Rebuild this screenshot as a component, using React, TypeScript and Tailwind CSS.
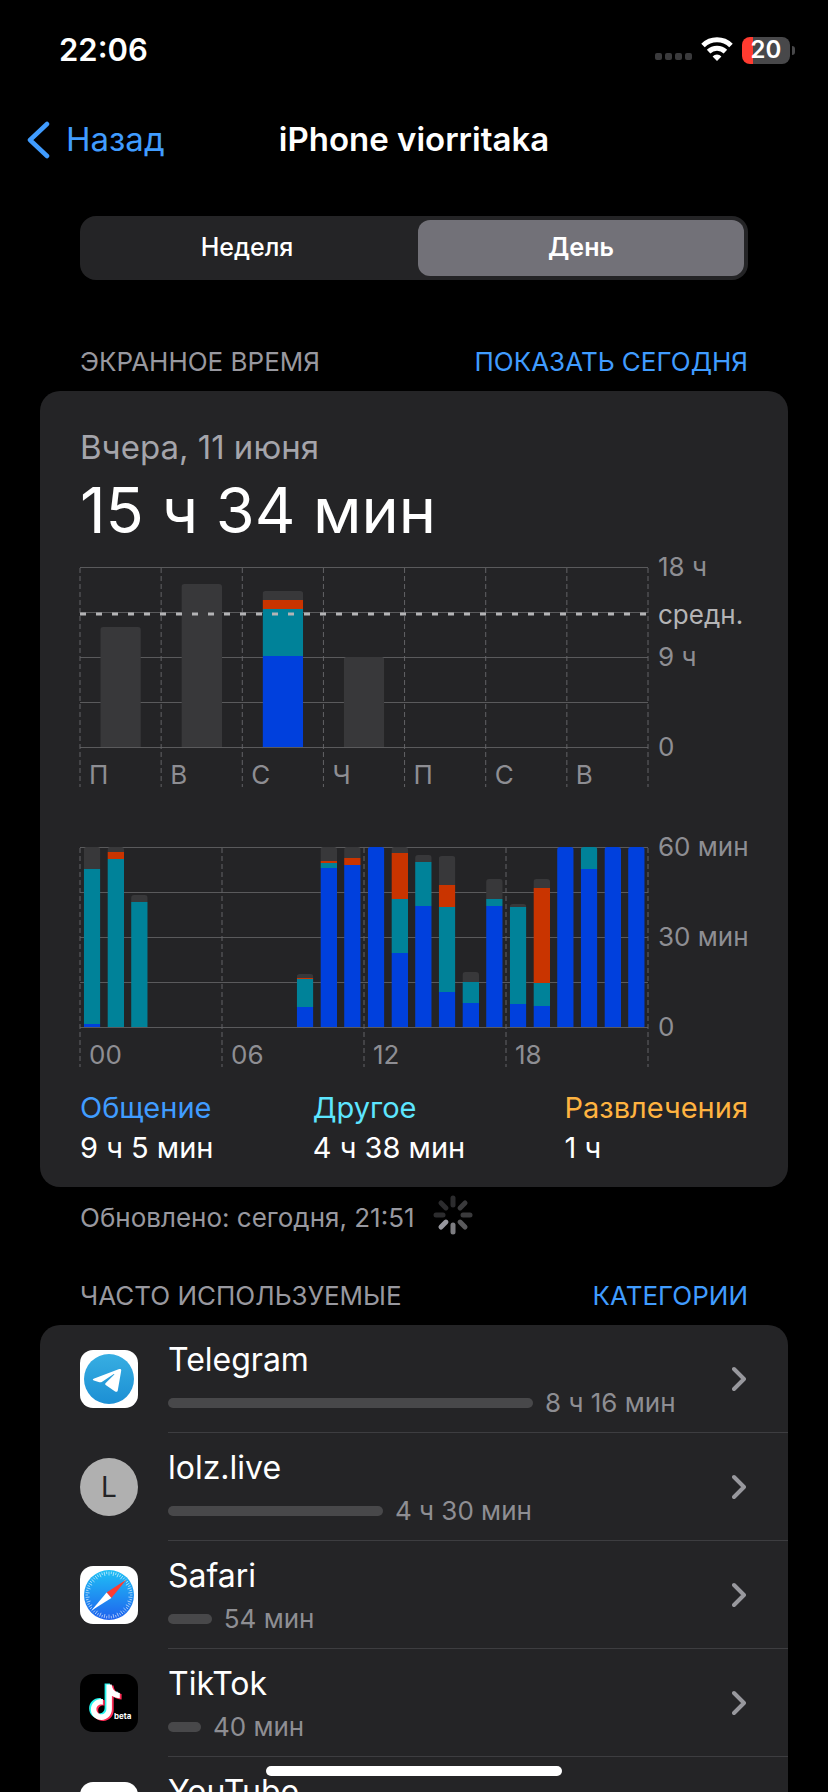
import { useState } from 'react';
import type { ReactNode } from 'react';

type Segment = [kind: 'social' | 'other' | 'fun' | 'rest', size: number];

interface IBar {
  slot: number;
  segments: Segment[];
}

const FILLS = {
  social: '#0040dd',
  other: '#008299',
  fun: '#c93400',
  rest: '#38383a',
};

const PLOT_HEIGHT = 180;

const WEEK_BARS: IBar[] = [
  { slot: 0, segments: [['rest', 120]] },
  { slot: 1, segments: [['rest', 163]] },
  { slot: 2, segments: [['social', 91], ['other', 47], ['fun', 9], ['rest', 9]] },
  { slot: 3, segments: [['rest', 90]] },
];

const DAY_BARS: IBar[] = [
  { slot: 0, segments: [['social', 3], ['other', 155], ['rest', 22]] },
  { slot: 1, segments: [['other', 168], ['fun', 7], ['rest', 5]] },
  { slot: 2, segments: [['other', 125], ['rest', 7]] },
  { slot: 9, segments: [['social', 20], ['other', 28], ['fun', 1], ['rest', 4]] },
  { slot: 10, segments: [['social', 159], ['other', 5], ['fun', 2], ['rest', 14]] },
  { slot: 11, segments: [['social', 162], ['fun', 7], ['rest', 11]] },
  { slot: 12, segments: [['social', 180]] },
  { slot: 13, segments: [['social', 74], ['other', 54], ['fun', 46], ['rest', 6]] },
  { slot: 14, segments: [['social', 121], ['other', 44], ['rest', 7]] },
  { slot: 15, segments: [['social', 35], ['other', 85], ['fun', 22], ['rest', 29]] },
  { slot: 16, segments: [['social', 24], ['other', 21], ['rest', 10]] },
  { slot: 17, segments: [['social', 121], ['other', 7], ['rest', 20]] },
  { slot: 18, segments: [['social', 23], ['other', 97], ['rest', 3]] },
  { slot: 19, segments: [['social', 21], ['other', 23], ['fun', 95], ['rest', 9]] },
  { slot: 20, segments: [['social', 180]] },
  { slot: 21, segments: [['social', 158], ['other', 22]] },
  { slot: 22, segments: [['social', 180]] },
  { slot: 23, segments: [['social', 180]] },
];

interface IChartProps {
  id: string;
  label: string;
  bars: IBar[];
  slots: number;
  barOffset: number;
  barWidth: number;
  ticks: string[];
  scale: string[];
  average?: number;
}

function Chart({ id, label, bars, slots, barOffset, barWidth, ticks, scale, average }: IChartProps) {
  return (
    <div className="flex text-[26px] leading-[30px] text-[#8e8e93]">
      <svg className="h-[220px] min-w-0 flex-1 overflow-visible" role="img" aria-label={label}>
        {[0, 45, 90, 135, 180].map((y) => (
          <rect key={y} x="0" y={y} width="100%" height="1" fill="#5a5a5c" />
        ))}
        {[...ticks, ''].map((tick, i) => {
          const x = `${(i / ticks.length) * 100}%`;
          return (
            <g key={i}>
              <line x1={x} x2={x} y1="1" y2="220" stroke="#636366" strokeWidth="1" strokeDasharray="5 3" />
              <text x={x} y="217" dx="9" fill="currentColor">
                {tick}
              </text>
            </g>
          );
        })}
        {bars.map((bar) => {
          const total = bar.segments.reduce((sum, [, size]) => sum + size, 0);
          const x = `${((bar.slot + barOffset) / slots) * 100}%`;
          const width = `${(barWidth / slots) * 100}%`;
          let y = PLOT_HEIGHT;
          return (
            <g key={bar.slot}>
              <clipPath id={`${id}-${bar.slot}`}>
                <rect x={x} y={PLOT_HEIGHT - total} width={width} height={total + 6} rx="3" />
              </clipPath>
              <g clipPath={`url(#${id}-${bar.slot})`}>
                {bar.segments.map(([kind, size]) => {
                  y -= size;
                  return <rect key={kind} x={x} y={y} width={width} height={size} fill={FILLS[kind]} />;
                })}
              </g>
            </g>
          );
        })}
        {average && (
          <line x1="0" x2="100%" y1={average} y2={average} stroke="#b4b4b6" strokeWidth="3" strokeDasharray="6 10" />
        )}
      </svg>
      <div className="relative -mt-[15px] flex h-[210px] w-[100px] flex-col justify-between pl-[10px] whitespace-nowrap">
        {scale.map((mark) => (
          <span key={mark}>{mark}</span>
        ))}
        {average && (
          <span className="absolute top-12 text-[#b4b4b6]">средн.</span>
        )}
      </div>
    </div>
  );
}

function StatusBar() {
  return (
    <div className="flex h-[100px] shrink-0 items-center justify-between pr-[33px] pl-[59px]">
      <span className="text-[31px] font-semibold">22:06</span>
      <div className="flex items-center">
        <svg className="h-7 w-[38px]" viewBox="0 0 38 28" fill="#3a3a3c">
          <rect x="0" y="17" width="7" height="7" rx="2" />
          <rect x="10" y="17" width="7" height="7" rx="2" />
          <rect x="20" y="17" width="7" height="7" rx="2" />
          <rect x="30" y="17" width="7" height="7" rx="2" />
        </svg>
        <svg className="ml-2 h-7 w-8" viewBox="0 0 32 28" fill="none" stroke="#fff" strokeWidth="5">
          <path d="M2 9.500a20 20 0 0 1 28 0" />
          <path d="M7.600 15.600a12 12 0 0 1 16.800 0" />
          <path d="M16 25l-4.400-4.600a6.200 6.200 0 0 1 8.800 0z" fill="#fff" stroke="none" />
        </svg>
        <div className="ml-[9px] flex h-[27px] w-12 items-center justify-center rounded-lg bg-linear-to-r from-[#ff3b30] from-22% to-[#48484a] to-22% text-[24px] font-semibold">
          20
        </div>
        <div className="ml-[2px] h-[9px] w-[3px] rounded-r-full bg-[#48484a]" />
      </div>
    </div>
  );
}

function NavBar() {
  return (
    <nav className="grid h-20 shrink-0 grid-cols-[1fr_auto_1fr] items-center px-[27px]">
      <a href="#back" className="flex items-center gap-4 text-[33px] text-[#409cff]">
        <svg className="h-[38px] w-[23px]" viewBox="0 0 23 38" fill="none" stroke="currentColor" strokeWidth="4.5" strokeLinecap="round" strokeLinejoin="round">
          <path d="M20 3L3 19l17 16" />
        </svg>
        Назад
      </a>
      <h1 className="text-[33px] font-semibold">iPhone viorritaka</h1>
    </nav>
  );
}

function SectionHeader({ title, action }: { title: string; action: string }) {
  return (
    <div className="mx-20 mb-[14px] flex justify-between text-[26px] leading-[30px]">
      <h2 className="text-[#98989f]">{title}</h2>
      <button type="button" className="text-[#409cff]">
        {action}
      </button>
    </div>
  );
}

function Spinner() {
  const shades = ['#2c2c2e', '#3a3a3c', '#3a3a3c', '#5a5a5c', '#7c7c80', '#98989f', '#2c2c2e', '#2c2c2e'];
  return (
    <svg className="h-10 w-10" viewBox="0 0 40 40" strokeWidth="5" strokeLinecap="round">
      {shades.map((shade, i) => (
        <line key={i} x1="20" y1="3" x2="20" y2="10" stroke={shade} transform={`rotate(${i * 45} 20 20)`} />
      ))}
    </svg>
  );
}

function TelegramIcon() {
  return (
    <svg className="h-[58px] w-[58px]" viewBox="0 0 58 58">
      <defs>
        <linearGradient id="tg" x1="0" y1="0" x2="0" y2="1">
          <stop offset="0" stopColor="#37aee2" />
          <stop offset="1" stopColor="#1c8fd4" />
        </linearGradient>
      </defs>
      <rect width="58" height="58" rx="13" fill="#fff" />
      <circle cx="29" cy="29" r="25" fill="url(#tg)" />
      <path
        d="M13.6 28.8l25.6-9.700c1.400-.5 2.200.2 2 1.600l-3.400 19.600c-.3 1.600-1.400 2-2.700 1.100l-9.400-6.500c-.7-.6-.7-1.200 0-1.900l8.400-8.200c.5-.6 0-.9-.7-.5L21.800 31.900c-.8.5-1.500.5-2.400.3l-5.600-1.700c-1.300-.4-1.300-1.200-.2-1.700z"
        fill="#fff"
      />
    </svg>
  );
}

function LetterIcon() {
  return (
    <span className="flex h-[58px] w-[58px] items-center justify-center rounded-full bg-[#b0b0b0] text-[28px] text-[#242426]">
      L
    </span>
  );
}

function SafariIcon() {
  return (
    <svg className="h-[58px] w-[58px]" viewBox="0 0 58 58">
      <defs>
        <linearGradient id="sf" x1="0" y1="0" x2="0" y2="1">
          <stop offset="0" stopColor="#1fc0f5" />
          <stop offset="1" stopColor="#1f62ee" />
        </linearGradient>
      </defs>
      <rect width="58" height="58" rx="13" fill="#fff" />
      <circle cx="29" cy="29" r="25" fill="url(#sf)" />
      <g stroke="#fff" strokeWidth="0.7" opacity="0.8">
        {Array.from({ length: 60 }, (_, i) => (
          <line key={i} x1="29" y1="5.5" x2="29" y2={i % 2 ? 8 : 9.5} transform={`rotate(${i * 6} 29 29)`} />
        ))}
      </g>
      <path d="M46.5 13.5L31.4 32 26.6 26.5z" fill="#ff3b30" />
      <path d="M11.5 44.5L26.6 26.5 31.4 32z" fill="#fff" />
    </svg>
  );
}

function TikTokIcon() {
  const note =
    'M25.2 10h5.3c.5 4.8 3.3 8 8.1 8.4v5.4c-3 0-5.6-.9-7.9-2.5v13.2c0 6.2-4.6 10.9-10.4 10.9-6 0-10.6-4.6-10.6-10.5 0-6.3 5.4-11.1 12-10.3v5.6c-3.400-.9-6.500 1.300-6.500 4.600 0 2.900 2.200 5 5 5s5-2.200 5-5.300z';
  return (
    <svg className="h-[58px] w-[58px]" viewBox="0 0 58 58">
      <rect width="58" height="58" rx="13" fill="#000" />
      <path d={note} fill="#25f4ee" transform="translate(-.6 -.6)" />
      <path d={note} fill="#fe2c55" transform="translate(3 1.600)" />
      <path d={note} fill="#fff" transform="translate(1.200 .5)" />
      <text x="34" y="45" fontSize="8" fontWeight="700" fill="#fff">
        beta
      </text>
    </svg>
  );
}

function YouTubeIcon() {
  return (
    <svg className="h-[58px] w-[58px]" viewBox="0 0 58 58">
      <rect width="58" height="58" rx="13" fill="#fff" />
      <rect x="9" y="17" width="40" height="25" rx="7" fill="#f00" />
      <path d="M25 23l11 6.500-11 6.500z" fill="#fff" />
    </svg>
  );
}

interface IAppUsage {
  name: string;
  time: string;
  share: number;
  icon: ReactNode;
}

const APPS: IAppUsage[] = [
  { name: 'Telegram', time: '8 ч 16 мин', share: 67.6, icon: <TelegramIcon /> },
  { name: 'lolz.live', time: '4 ч 30 мин', share: 39.8, icon: <LetterIcon /> },
  { name: 'Safari', time: '54 мин', share: 8.1, icon: <SafariIcon /> },
  { name: 'TikTok', time: '40 мин', share: 6.1, icon: <TikTokIcon /> },
  { name: 'YouTube', time: '32 мин', share: 4.9, icon: <YouTubeIcon /> },
];

function AppRow({ app }: { app: IAppUsage }) {
  return (
    <a href={`#${app.name}`} className="flex h-[108px] items-stretch pl-10">
      <div className="flex w-[88px] shrink-0 items-center">{app.icon}</div>
      <div className="flex min-w-0 flex-1 items-center gap-6 border-b border-[#3d3d40] pr-[42px]">
        <div className="min-w-0 flex-1 self-start pt-[13px]">
          <div className="text-[32px] leading-[44px]">{app.name}</div>
          <div className="flex items-center gap-3 text-[26px] leading-[42px] whitespace-nowrap text-[#8e8e93]">
            <div className="h-[10px] shrink-0 rounded-full bg-[#48484a]" style={{ width: `${app.share}%` }} />
            {app.time}
          </div>
        </div>
        <svg className="h-[26px] w-[14px]" viewBox="0 0 14 26" fill="none" stroke="#98989d" strokeWidth="4" strokeLinecap="round" strokeLinejoin="round">
          <path d="M2 3l10 10L2 23" />
        </svg>
      </div>
    </a>
  );
}

const LEGEND = [
  { name: 'Общение', time: '9 ч 5 мин', color: 'text-[#409cff]' },
  { name: 'Другое', time: '4 ч 38 мин', color: 'text-[#5de6ff]' },
  { name: 'Развлечения', time: '1 ч', color: 'text-[#ffb340]' },
];

export default function App() {
  const [period, setPeriod] = useState('День');

  return (
    <div className="relative flex h-screen flex-col overflow-hidden bg-black font-['Inter','Noto_Sans',sans-serif] text-white">
      <StatusBar />
      <NavBar />
      <main className="shrink-0">
        <div className="mx-20 mt-9 flex h-16 gap-2 rounded-2xl bg-[#242426] p-1">
          {['Неделя', 'День'].map((name) => (
            <button
              key={name}
              type="button"
              aria-pressed={period === name}
              onClick={() => setPeriod(name)}
              className={
                period === name
                  ? 'flex-1 rounded-xl bg-[#727178] text-[25px] font-semibold'
                  : 'flex-1 rounded-xl text-[25px] font-medium'
              }
            >
              {name}
            </button>
          ))}
        </div>

        <section className="mt-[67px]">
          <SectionHeader title="ЭКРАННОЕ ВРЕМЯ" action="ПОКАЗАТЬ СЕГОДНЯ" />
          <div className="mx-10 rounded-[20px] bg-[#242426] px-10 pt-9 pb-[19px]">
            <p className="text-[33px] leading-[40px] text-[#a5a5ab]">Вчера, 11 июня</p>
            <p className="mt-[7px] mb-[21px] text-[63px] leading-[72px]">15 ч 34 мин</p>
            <Chart
              id="week"
              label="Неделя"
              bars={WEEK_BARS}
              slots={7}
              barOffset={0.25}
              barWidth={0.5}
              ticks={['П', 'В', 'С', 'Ч', 'П', 'С', 'В']}
              scale={['18 ч', '9 ч', '0']}
              average={47}
            />
            <div className="mt-[60px]">
              <Chart
                id="day"
                label="День"
                bars={DAY_BARS}
                slots={24}
                barOffset={0.16}
                barWidth={0.7}
                ticks={['00', '06', '12', '18']}
                scale={['60 мин', '30 мин', '0']}
              />
            </div>
            <div className="mt-[21px] flex justify-between text-[29px] leading-[40px]">
              {LEGEND.map((item) => (
                <div key={item.name}>
                  <p className={item.color}>{item.name}</p>
                  <p>{item.time}</p>
                </div>
              ))}
            </div>
          </div>
          <div className="mx-20 mt-2 flex items-end gap-[18px]">
            <p className="text-[26px] leading-[34px] text-[#98989f]">Обновлено: сегодня, 21:51</p>
            <Spinner />
          </div>
        </section>

        <section className="mt-[46px]">
          <SectionHeader title="ЧАСТО ИСПОЛЬЗУЕМЫЕ" action="КАТЕГОРИИ" />
          <div className="mx-10 rounded-[20px] bg-[#242426]">
            {APPS.map((app) => (
              <AppRow key={app.name} app={app} />
            ))}
          </div>
        </section>
      </main>
      <div className="absolute bottom-4 left-1/2 h-[10px] w-[296px] -translate-x-1/2 rounded-full bg-white" />
    </div>
  );
}
